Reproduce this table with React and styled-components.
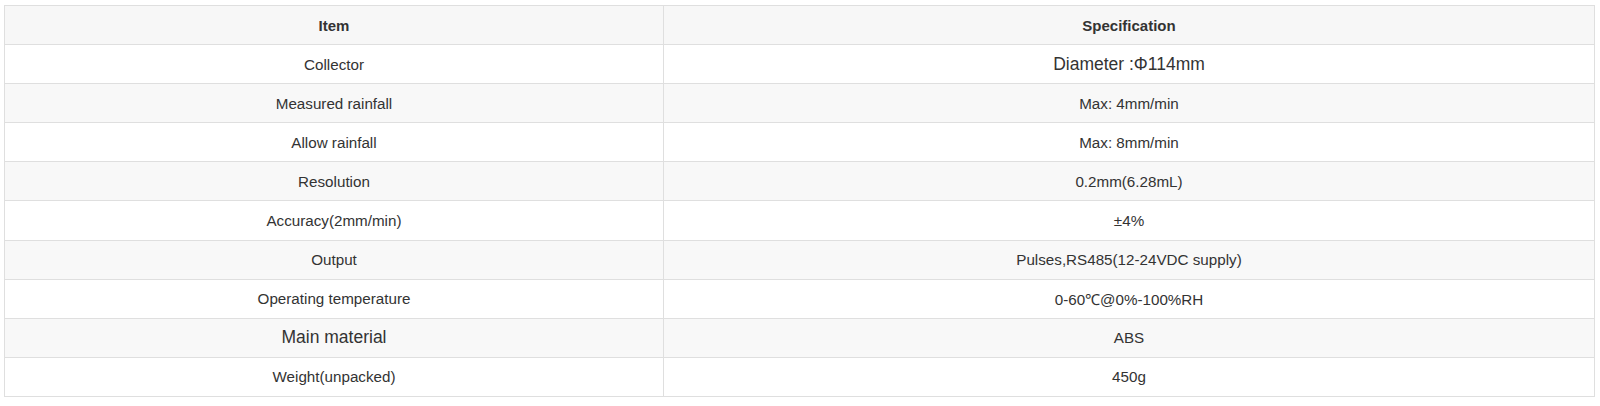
import styled, { createGlobalStyle } from "styled-components";

const GlobalStyle = createGlobalStyle`
  html, body {
    margin: 0;
    padding: 0;
    background: #ffffff;
  }
  body {
    font-family: "Liberation Sans", Arial, sans-serif;
  }
`;

export const Page = styled.div`
  padding: 5px 5px 0 4px;
`;

export const SpecTable = styled.table`
  width: 100%;
  border-collapse: collapse;
  table-layout: fixed;
  border: 1px solid #dfdfdf;
  color: #333333;
`;

export const HeadCell = styled.th`
  height: 38.1px;
  padding: 0 8px;
  border: 1px solid #dfdfdf;
  background-color: #f7f7f7;
  font-size: 15px;
  font-weight: bold;
  text-align: center;
  vertical-align: middle;
`;

export const Row = styled.tr`
  background-color: ${(p) => (p.$striped ? "#f8f8f8" : "#ffffff")};
`;

export const Cell = styled.td`
  height: 38.1px;
  padding: 0 8px;
  border: 1px solid #dfdfdf;
  font-size: ${(p) => (p.$large ? "17.5px" : "15.2px")};
  text-align: center;
  vertical-align: middle;
`;

const specs = [
  { item: "Collector", value: "Diameter :Φ114mm", largeValue: true },
  { item: "Measured rainfall", value: "Max: 4mm/min" },
  { item: "Allow rainfall", value: "Max: 8mm/min" },
  { item: "Resolution", value: "0.2mm(6.28mL)" },
  { item: "Accuracy(2mm/min)", value: "±4%" },
  { item: "Output", value: "Pulses,RS485(12-24VDC supply)" },
  { item: "Operating temperature", value: "0-60℃@0%-100%RH" },
  { item: "Main material", value: "ABS", largeItem: true },
  { item: "Weight(unpacked)", value: "450g" },
];

const App = () => {
  return (
    <>
      <GlobalStyle />
      <Page>
        <SpecTable>
          <colgroup>
            <col style={{ width: "659px" }} />
            <col />
          </colgroup>
          <thead>
            <tr>
              <HeadCell>Item</HeadCell>
              <HeadCell>Specification</HeadCell>
            </tr>
          </thead>
          <tbody>
            {specs.map((s, i) => (
              <Row key={s.item} $striped={i % 2 === 1}>
                <Cell $large={s.largeItem}>{s.item}</Cell>
                <Cell $large={s.largeValue}>{s.value}</Cell>
              </Row>
            ))}
          </tbody>
        </SpecTable>
      </Page>
    </>
  );
};

export default App;
